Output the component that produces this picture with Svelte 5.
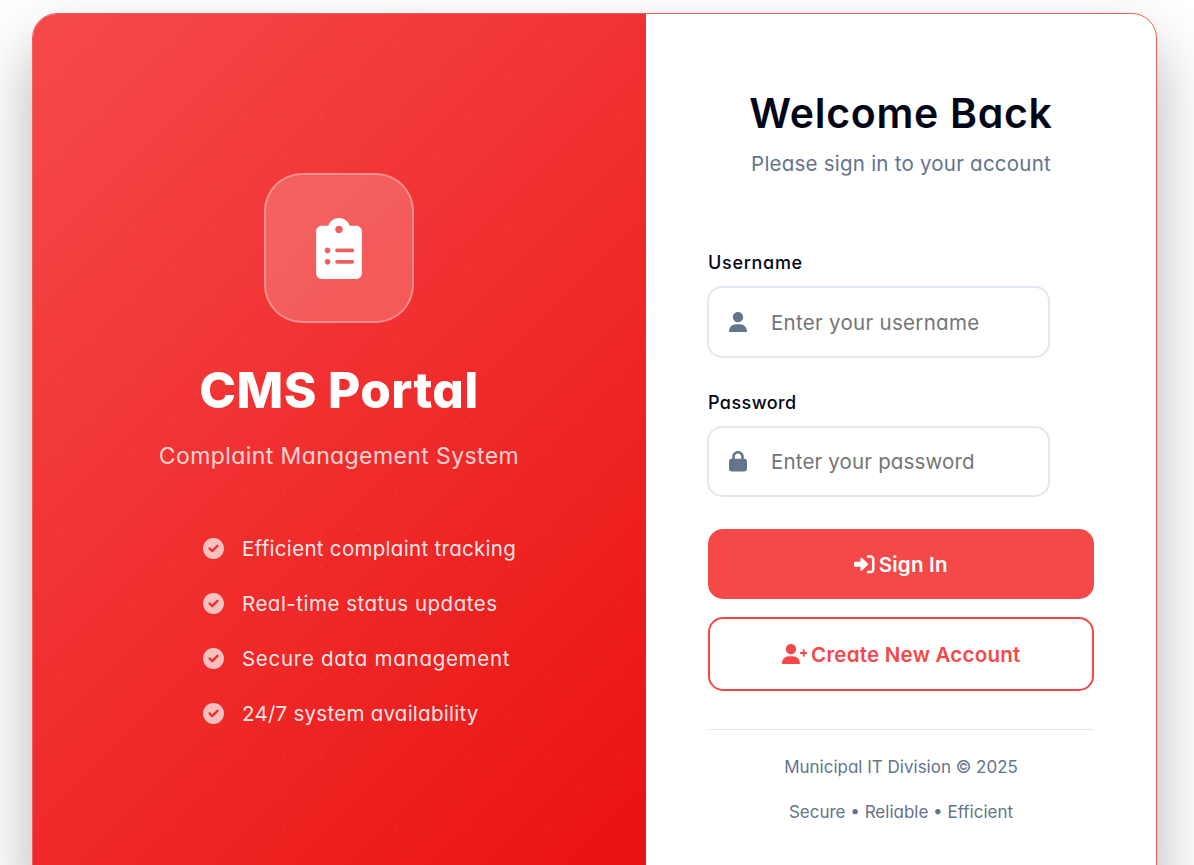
<script>
  const features = [
    { text: 'Efficient complaint tracking', spacing: 0.3 },
    { text: 'Real-time status updates', spacing: 0.5 },
    { text: 'Secure data management', spacing: 0.72 },
    { text: '24/7 system availability', spacing: 0.26 }
  ];
  let username = $state('');
  let password = $state('');
</script>

<div class="page">
  <main class="card">
    <section class="brand">
      <div class="logo">
        <svg viewBox="0 0 384 512" width="46" height="61"><path d="M336 64h-53.88C268.9 26.8 233.7 0 192 0S115.1 26.8 101.9 64H48C21.5 64 0 85.48 0 112v352C0 490.5 21.49 512 48 512h288c26.51 0 48-21.49 48-48v-352C384 85.48 362.5 64 336 64zM192 64c17.67 0 32 14.33 32 32s-14.33 32-32 32S160 113.7 160 96S174.3 64 192 64zM96 392c-13.25 0-24-10.75-24-24S82.75 344 96 344s24 10.75 24 24S109.3 392 96 392zM96 296c-13.25 0-24-10.75-24-24S82.75 248 96 248S120 258.8 120 272S109.3 296 96 296zM304 384h-128C167.2 384 160 376.8 160 368C160 359.2 167.2 352 176 352h128c8.801 0 16 7.199 16 16C320 376.8 312.8 384 304 384zM304 288h-128C167.2 288 160 280.8 160 272C160 263.2 167.2 256 176 256h128C312.8 256 320 263.2 320 272C320 280.8 312.8 288 304 288z" /></svg>
      </div>
      <h1>CMS Portal</h1>
      <p class="tagline">Complaint Management System</p>
      <ul>
        {#each features as f}
          <li>
            <svg viewBox="0 0 512 512" width="21" height="21"><path d="M0 256C0 114.6 114.6 0 256 0C397.4 0 512 114.6 512 256C512 397.4 397.4 512 256 512C114.6 512 0 397.4 0 256zM371.8 211.8C382.7 200.9 382.7 183.1 371.8 172.2C360.9 161.3 343.1 161.3 332.2 172.2L224 280.4L179.8 236.2C168.9 225.3 151.1 225.3 140.2 236.2C129.3 247.1 129.3 264.9 140.2 275.8L204.2 339.8C215.1 350.7 232.9 350.7 243.8 339.8L371.8 211.8z" /></svg>
            <span style="letter-spacing: {f.spacing}px">{f.text}</span>
          </li>
        {/each}
      </ul>
    </section>

    <section class="login">
      <h2>Welcome Back</h2>
      <p class="subtitle">Please sign in to your account</p>

      <form>
        <label class="user-label" for="username">Username</label>
        <div class="field">
          <svg viewBox="0 0 448 512" width="18" height="20.5"><path d="M224 256c70.7 0 128-57.31 128-128s-57.3-128-128-128C153.3 0 96 57.31 96 128S153.3 256 224 256zM274.7 304H173.3C77.61 304 0 381.6 0 477.3c0 19.14 15.52 34.67 34.66 34.67h378.7C432.5 512 448 496.5 448 477.3C448 381.6 370.4 304 274.7 304z" /></svg>
          <input id="username" type="text" placeholder="Enter your username" bind:value={username} />
        </div>

        <label class="pass-label" for="password">Password</label>
        <div class="field second">
          <svg viewBox="0 0 448 512" width="18" height="20.5"><path d="M80 192V144C80 64.47 144.5 0 224 0C303.5 0 368 64.47 368 144V192H384C419.3 192 448 220.7 448 256V448C448 483.3 419.3 512 384 512H64C28.65 512 0 483.3 0 448V256C0 220.7 28.65 192 64 192H80zM144 192H304V144C304 99.82 268.2 64 224 64C179.8 64 144 99.82 144 144V192z" /></svg>
          <input id="password" class="pass" type="password" placeholder="Enter your password" bind:value={password} />
        </div>

        <button type="button" class="primary">
          <svg viewBox="0 0 512 512" width="20.5" height="20.5"><path d="M344.7 238.5l-144.1-136C193.7 95.97 183.4 94.17 174.6 97.95C165.8 101.8 160.1 110.4 160.1 120V192H32.02C14.33 192 0 206.3 0 224v64c0 17.68 14.33 32 32.02 32h128.1v72c0 9.578 5.707 18.25 14.51 22.05c8.803 3.781 19.03 1.984 26-4.594l144.1-136C354.3 264.1 354.3 247.9 344.7 238.5zM416 32h-64c-17.67 0-32 14.33-32 32s14.33 32 32 32h64c17.67 0 32 14.33 32 32v256c0 17.67-14.33 32-32 32h-64c-17.67 0-32 14.33-32 32s14.33 32 32 32h64c53.02 0 96-42.98 96-96V128C512 74.98 469 32 416 32z" /></svg>
          <span>Sign In</span>
        </button>
        <button type="button" class="outline">
          <svg viewBox="0 0 640 512" width="25.6" height="20.5"><path d="M224 256c70.7 0 128-57.31 128-128S294.7 0 224 0C153.3 0 96 57.31 96 128S153.3 256 224 256zM274.7 304H173.3C77.61 304 0 381.6 0 477.3C0 496.5 15.52 512 34.66 512h378.7C432.5 512 448 496.5 448 477.3C448 381.6 370.4 304 274.7 304zM616 200h-48v-48C568 138.8 557.3 128 544 128s-24 10.75-24 24v48h-48C458.8 200 448 210.8 448 224s10.75 24 24 24h48v48C520 309.3 530.8 320 544 320s24-10.75 24-24v-48h48C629.3 248 640 237.3 640 224S629.3 200 616 200z" /></svg>
          <span>Create New Account</span>
        </button>
      </form>

      <footer>
        <p>Municipal IT Division © 2025</p>
        <p>Secure • Reliable • Efficient</p>
      </footer>
    </section>
  </main>
</div>

<style>
  :global(body) { background: #fff; overflow: hidden; }
  * { box-sizing: border-box; }
  h1, h2, p, ul { margin: 0; padding: 0; }
  svg { display: block; fill: currentColor; flex: none; }

  .page {
    height: 865px;
    overflow: hidden;
    padding: 13px 37px 0 32px;
    font-family: Inter, sans-serif;
    font-feature-settings: "cv11";
  }
  .card {
    display: grid;
    grid-template-columns: 613px 1fr;
    height: 884px;
    border: 1px solid #f65c5c;
    border-radius: 25px;
    background: #fff;
    overflow: hidden;
    box-shadow: 0 31px 62px rgba(0, 0, 0, 0.3);
  }

  .brand {
    display: flex;
    flex-direction: column;
    align-items: center;
    padding: 159px 1px 0 0;
    color: #fff;
    background:
      radial-gradient(circle, rgba(255, 255, 255, 0.06) 0.8px, transparent 1.5px) 7px 9px / 37.5px 37.5px,
      linear-gradient(135deg, #f64a4a 0%, #ea1010 100%);
  }
  .logo {
    display: flex;
    align-items: center;
    justify-content: center;
    width: 150px;
    height: 150px;
    border: 2px solid rgba(255, 255, 255, 0.3);
    border-radius: 38px;
    background: rgba(255, 255, 255, 0.2);
  }
  h1 {
    margin-top: 37px;
    font-size: 49.5px;
    line-height: 60px;
    font-weight: 800;
    letter-spacing: 0.4px;
  }
  .tagline {
    margin-top: 21px;
    font-size: 23px;
    line-height: 30px;
    letter-spacing: 0.4px;
    color: rgba(255, 255, 255, 0.8);
  }
  ul {
    width: 312px;
    margin: 50px 0 0 40px;
    list-style: none;
  }
  li {
    display: flex;
    align-items: center;
    gap: 18px;
    height: 55px;
    font-size: 20.5px;
    line-height: 30px;
    white-space: nowrap;
    color: rgba(255, 255, 255, 0.9);
  }
  li svg { color: rgba(255, 255, 255, 0.7); }

  .login {
    padding: 69px 62px 0;
    color: #020617;
  }
  h2 {
    font-size: 41px;
    line-height: 60px;
    font-weight: 600;
    letter-spacing: 0.7px;
    text-align: center;
  }
  .subtitle {
    margin-top: 6px;
    font-size: 20.5px;
    line-height: 30px;
    letter-spacing: 0.23px;
    text-align: center;
    color: #64748b;
  }
  form {
    display: flex;
    flex-direction: column;
    padding-top: 70px;
  }
  label {
    height: 27px;
    font-size: 18px;
    line-height: 27px;
    font-weight: 500;
  }
  .user-label { letter-spacing: 0.7px; }
  .pass-label { letter-spacing: 0.42px; }
  .field {
    display: flex;
    align-items: center;
    gap: 24px;
    width: 343px;
    height: 72px;
    margin: 10px 0 31px -1px;
    padding-left: 20px;
    border: 2px solid #e2e8f0;
    border-radius: 15px;
    color: #64748b;
  }
  .field.second { height: 71px; margin-bottom: 32px; }
  input {
    flex: 1;
    min-width: 0;
    padding: 0;
    border: 0;
    outline: 0;
    background: none;
    font: inherit;
    font-feature-settings: inherit;
    font-size: 20.5px;
    letter-spacing: 0.29px;
  }
  input.pass { letter-spacing: 0.16px; }
  input::placeholder { color: #757575; opacity: 1; }

  button {
    display: flex;
    align-items: center;
    justify-content: center;
    gap: 4px;
    height: 70px;
    padding: 0;
    border: 0;
    border-radius: 15px;
    font: inherit;
    font-feature-settings: inherit;
    font-size: 20.5px;
    font-weight: 600;
    letter-spacing: 0.24px;
  }
  .primary { background: #f54848; color: #fff; }
  .outline {
    height: 74px;
    margin-top: 18px;
    border: 2px solid #f54848;
    background: #fff;
    color: #f54848;
  }

  footer {
    margin-top: 38px;
    padding-top: 22px;
    border-top: 1px solid #e2e8f0;
    text-align: center;
    font-size: 17px;
    line-height: 30px;
    color: #64748b;
  }
  footer p + p { margin-top: 15px; }
</style>
